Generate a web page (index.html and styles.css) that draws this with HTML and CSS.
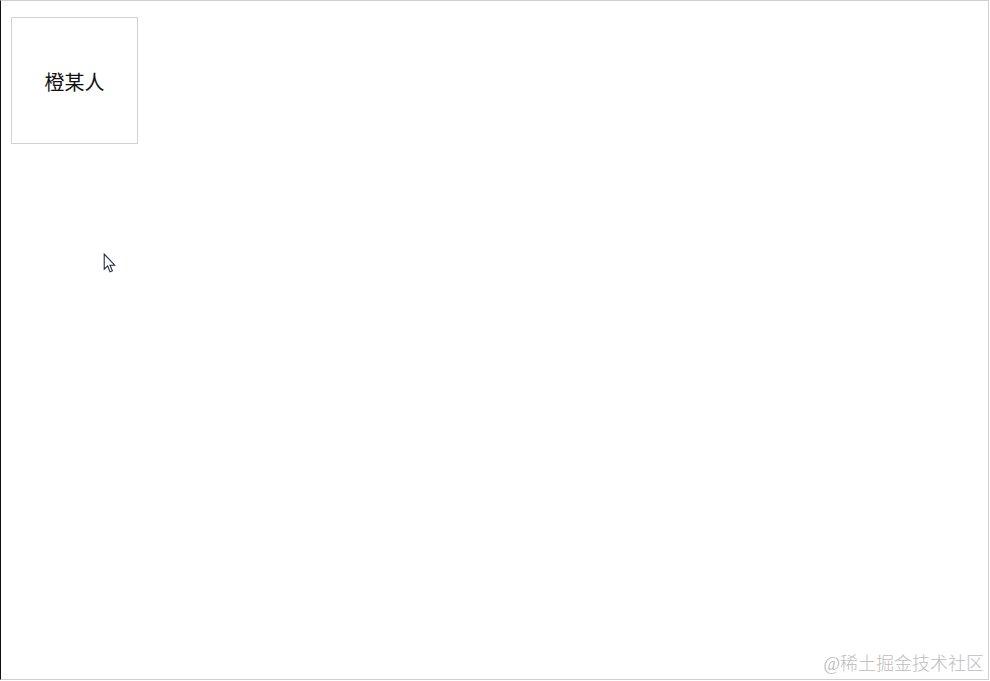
FILE: index.html
```html
<!DOCTYPE html>
<html lang="zh">
<head>
<meta charset="utf-8">
<title>橙某人</title>
<link rel="stylesheet" href="styles.css">
</head>
<body>
<div class="frame">
  <div class="box">橙某人</div>
  <svg class="cursor" width="15" height="22" viewBox="0 0 14 21" aria-hidden="true">
    <path d="M1 1 L1 15.5 L4.3 12.4 L6.6 18 L8.8 17 L6.5 11.6 L11 11.6 Z" fill="#fff" stroke="#1b2540" stroke-width="1" stroke-linejoin="miter"/>
  </svg>
  <div class="watermark">@稀土掘金技术社区</div>
</div>
</body>
</html>
```
FILE: styles.css
```css
html, body {
  margin: 0;
  padding: 0;
  background: #fff;
}
.frame {
  position: relative;
  box-sizing: border-box;
  width: 989px;
  height: 680px;
  border-left: 1px solid #111;
  border-top: 1px solid #cfcfcf;
  border-right: 1px solid #cfcfcf;
  border-bottom: 1px solid #cfcfcf;
  padding: 16px 0 0 10px;
}
.box {
  box-sizing: border-box;
  width: 127px;
  height: 127px;
  border: 1px solid #d2d2d2;
  display: flex;
  align-items: center;
  justify-content: center;
  font-family: "Noto Sans CJK SC", sans-serif;
  font-size: 20px;
  color: #111;
  padding-top: 2px;
}
.cursor {
  position: absolute;
  left: 102px;
  top: 252px;
}
.watermark {
  position: absolute;
  right: 4px;
  bottom: 4px;
  font-family: "Liberation Serif", "Noto Sans CJK SC", serif;
  font-size: 18px;
  color: #bdbdbd;
  font-weight: 300;
}
```
